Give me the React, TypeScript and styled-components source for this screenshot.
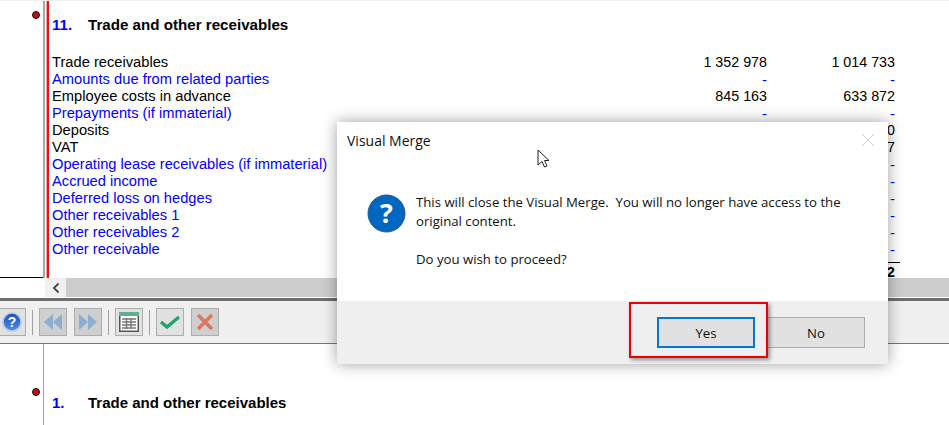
import React from "react";
import styled, { createGlobalStyle } from "styled-components";

const Global = createGlobalStyle`
  html, body { margin: 0; padding: 0; background: #fff; }
  body { width: 949px; height: 425px; overflow: hidden; font-family: "Liberation Sans", Arial, sans-serif; }
`;
const Page = styled.div`
  position: relative; width: 949px; height: 425px; overflow: hidden; display: flex; flex-direction: column; background: #fff;
`;
const TopDoc = styled.section`
  position: relative; height: 278px; display: flex; flex: none; border-top: 1px solid #eee; box-sizing: border-box; overflow: hidden;
`;
const Gutter = styled.div`
  width: 43px; flex: none; box-sizing: border-box; border-bottom: 1px solid #000; height: 277px;
`;
const GreyRule = styled.div`
  width: 2px; flex: none; margin-right: 1px; background: #a8a8a8;
`;
const RedRule = styled.div`
  width: 3px; flex: none; background: linear-gradient(90deg, #ff9a9a 33%, #f01010 33%);
`;
const Marker = styled.span<{ $top: number }>`
  position: absolute; left: 32px; top: ${p => p.$top}px; width: 6px; height: 6px; border-radius: 50%;
  background: #c01010; border: 1px solid #111;
`;
const Sheet = styled.div`
  flex: 1; padding: 15px 0 0 3px; min-width: 0; font-size: 14.7px; color: #000;
`;
const Heading = styled.div`
  display: flex; font-weight: 700; font-size: 15.15px; line-height: 17px; margin-bottom: 21px;
`;
const HeadingNo = styled.span`
  width: 36px; color: #0000ff;
`;
const Row = styled.div<{ $blue?: boolean }>`
  display: grid; grid-template-columns: 1fr 128px 128px; width: 843px; height: 17px; line-height: 17px;
  color: ${p => (p.$blue ? "#0000ff" : "#000")};
`;
const Num = styled.span<{ $dash?: boolean }>`
  text-align: right; font-size: ${p => (p.$dash ? "15px" : "14.3px")};
`;
const Total = styled.div`
  width: 848px; display: flex; justify-content: flex-end; font-weight: 700; margin-top: 4px;
`;
const TotalValue = styled.span`
  display: block; width: 40px; padding: 4px 5px 0 0; text-align: right; border-top: 1px solid #000; box-sizing: border-box; line-height: 11px;
`;
const ScrollBar = styled.div`
  height: 20px; flex: none; display: flex; background: #fff; padding-bottom: 1px; box-sizing: border-box;
`;
const ScrollBlank = styled.div`
  width: 45px;
`;
const ScrollArrow = styled.div`
  width: 21px; background: #f0f0f0; display: flex; align-items: center; justify-content: center;
`;
const ScrollTrack = styled.div`
  flex: 1; background: #cdcdcd;
`;
const Divider = styled.div`
  height: 3px; flex: none; background: #6e6e6e;
`;
const Toolbar = styled.div`
  height: 43px; flex: none; box-sizing: border-box; background: #f0f0f0; border-bottom: 1px solid #777;
  display: flex; align-items: center; gap: 6px; margin-left: -2px;
`;
const ToolButton = styled.button<{ $dim?: boolean; $joined?: boolean }>`
  width: 28px; height: 28px; padding: 0; box-sizing: border-box; display: flex; align-items: center; justify-content: center;
  background: ${p => (p.$dim ? "#cfcfcf" : "#e1e1e1")}; border: 1px solid #adadad;
  margin-left: ${p => (p.$joined ? "1px" : "0")};
`;
const Sep = styled.div`
  width: 1px; height: 25px; background: #a0a0a0;
`;
const BottomDoc = styled.section`
  position: relative; flex: 1; display: flex;
`;
const BottomGutter = styled.div`
  flex: none; border-right: 1px solid #a0a0a0; width: 43px;
`;
const BottomHeading = styled.div`
  display: flex; font-weight: 700; font-size: 15px; line-height: 17px; margin: 50px 0 0 8px; height: 17px;
`;
const BottomNo = styled.span`
  width: 36px; color: #0000ff;
`;
const Dialog = styled.div`
  position: absolute; left: 337px; top: 122px; width: 551px; height: 242px; background: #fff;
  box-shadow: 0 0 14px rgba(0,0,0,.38); display: flex; flex-direction: column;
  font-family: "Open Sans", "Noto Sans", sans-serif; color: #111;
`;
const DialogTitle = styled.div`
  height: 36px; flex: none; display: flex; align-items: center; justify-content: space-between; padding: 0 13px 0 10px;
  font-size: 14px;
`;
const DialogBody = styled.div`
  flex: 1; display: flex; gap: 10px; padding: 36px 30px 0 30px; font-size: 13.2px; line-height: 19px;
`;
const Message = styled.div`
  margin-top: -1px;
  p { margin: 0 0 19px; }
`;
const DialogFoot = styled.div`
  height: 63px; flex: none; background: #efefef; display: flex; justify-content: flex-end; align-items: flex-start; gap: 12px;
  padding: 16px 23px 0 0; box-sizing: border-box;
`;
const DialogButton = styled.button<{ $primary?: boolean }>`
  width: 98px; height: 31px; box-sizing: border-box; font: inherit; font-size: 13.2px; color: #111; background: #e1e1e1;
  border: ${p => (p.$primary ? "2px solid #0078d7" : "1px solid #adadad")}; padding: 0;
`;
const Highlight = styled.div`
  position: absolute; left: 629px; top: 302px; width: 139px; height: 56px; box-sizing: border-box; border: 2px solid #f00000;
  box-shadow: 2px 2px 4px rgba(0,0,0,.4); pointer-events: none;
`;
const Pointer = styled.svg`
  position: absolute; left: 537px; top: 149px;
`;

const rows: [string, boolean, string, string][] = [
  ["Trade receivables", false, "1 352 978", "1 014 733"],
  ["Amounts due from related parties", true, "-", "-"],
  ["Employee costs in advance", false, "845 163", "633 872"],
  ["Prepayments (if immaterial)", true, "-", "-"],
  ["Deposits", false, "", "0"],
  ["VAT", false, "", "7"],
  ["Operating lease receivables (if immaterial)", true, "", "-"],
  ["Accrued income", true, "", "-"],
  ["Deferred loss on hedges", true, "", "-"],
  ["Other receivables 1", true, "", "-"],
  ["Other receivables 2", true, "", "-"],
  ["Other receivable", true, "", "-"],
];

export default function App() {
  return (
    <Page>
      <Global />
      <TopDoc>
        <Gutter />
        <GreyRule />
        <RedRule />
        <Marker $top={10} />
        <Sheet>
          <Heading><HeadingNo>11.</HeadingNo>Trade and other receivables</Heading>
          {rows.map(([label, blue, a, b]) => (
            <Row key={label} $blue={blue}>
              <span>{label}</span>
              <Num $dash={a === "-"}>{a}</Num>
              <Num $dash={b === "-"}>{b}</Num>
            </Row>
          ))}
          <Total><TotalValue>2</TotalValue></Total>
        </Sheet>
      </TopDoc>
      <ScrollBar>
        <ScrollBlank />
        <ScrollArrow>
          <svg width="8" height="12" viewBox="0 0 8 12"><path d="M6.5 1.5 2 6l4.5 4.5" fill="none" stroke="#444" strokeWidth="1.8" /></svg>
        </ScrollArrow>
        <ScrollTrack />
      </ScrollBar>
      <Divider />
      <Toolbar>
        <ToolButton>
          <svg width="22" height="22" viewBox="0 0 22 22">
            <defs>
              <linearGradient id="helpFill" x1="0" y1="0" x2="0" y2="1">
                <stop offset="0" stopColor="#1f4fb0" />
                <stop offset="1" stopColor="#4f8fe8" />
              </linearGradient>
            </defs>
            <circle cx="11" cy="11" r="9" fill="url(#helpFill)" stroke="#b4c8ea" strokeWidth="1.6" />
            <text x="11" y="16" textAnchor="middle" fontSize="14" fontWeight="700" fill="#fff" fontFamily="Liberation Sans">?</text>
          </svg>
        </ToolButton>
        <Sep />
        <ToolButton $dim>
          <svg width="20" height="16" viewBox="0 0 20 16"><path d="M10 0v16L1 8zM19 0v16L10 8z" fill="#8fadcf" /></svg>
        </ToolButton>
        <ToolButton $dim $joined>
          <svg width="20" height="16" viewBox="0 0 20 16"><path d="M1 0v16l9-8zM10 0v16l9-8z" fill="#8fadcf" /></svg>
        </ToolButton>
        <Sep />
        <ToolButton>
          <svg width="20" height="20" viewBox="0 0 20 20">
            <rect x=".75" y=".75" width="18.5" height="18.5" fill="#fff" stroke="#555" strokeWidth="1.5" />
            <rect x="0" y="0" width="20" height="4" fill="#5fae8c" />
            <path d="M3 7h14M3 10h14M3 13h14M3 16h14M7.5 6v11M12 6v11" stroke="#777" strokeWidth="1.4" />
          </svg>
        </ToolButton>
        <Sep />
        <ToolButton>
          <svg width="22" height="20" viewBox="0 0 22 20"><path d="M2 10l6 5L20 5" fill="none" stroke="#1ea76c" strokeWidth="3.5" /></svg>
        </ToolButton>
        <ToolButton $dim $joined>
          <svg width="20" height="20" viewBox="0 0 20 20"><path d="M3 3l14 14M17 3 3 17" fill="none" stroke="#d87862" strokeWidth="3.6" /></svg>
        </ToolButton>
      </Toolbar>
      <BottomDoc>
        <BottomGutter />
        <Marker $top={44} />
        <BottomHeading><BottomNo>1.</BottomNo>Trade and other receivables</BottomHeading>
      </BottomDoc>
      <Dialog>
        <DialogTitle>
          Visual Merge
          <svg width="14" height="14" viewBox="0 0 14 14"><path d="M1 1l12 12M13 1 1 13" stroke="#ccc" strokeWidth="1" /></svg>
        </DialogTitle>
        <DialogBody>
          <svg width="39" height="39" viewBox="0 0 39 39" style={{ flex: "none" }}>
            <circle cx="19.5" cy="19.5" r="18.5" fill="#0067c0" stroke="#1d5a96" strokeWidth="1" />
            <text x="19.5" y="29" textAnchor="middle" fontSize="27" fontWeight="700" fill="#fff" fontFamily="Open Sans">?</text>
          </svg>
          <Message>
            <p>This will close the Visual Merge.&nbsp; You will no longer have access to the original content.</p>
            <p>Do you wish to proceed?</p>
          </Message>
        </DialogBody>
        <DialogFoot>
          <DialogButton $primary>Yes</DialogButton>
          <DialogButton>No</DialogButton>
        </DialogFoot>
      </Dialog>
      <Highlight />
      <Pointer width="15" height="20" viewBox="0 0 15 20">
        <path d="M1 1v15l4-3.5 2.5 5.5 2.5-1-2.5-5.5H12z" fill="#fff" stroke="#222" strokeWidth="1" />
      </Pointer>
    </Page>
  );
}
